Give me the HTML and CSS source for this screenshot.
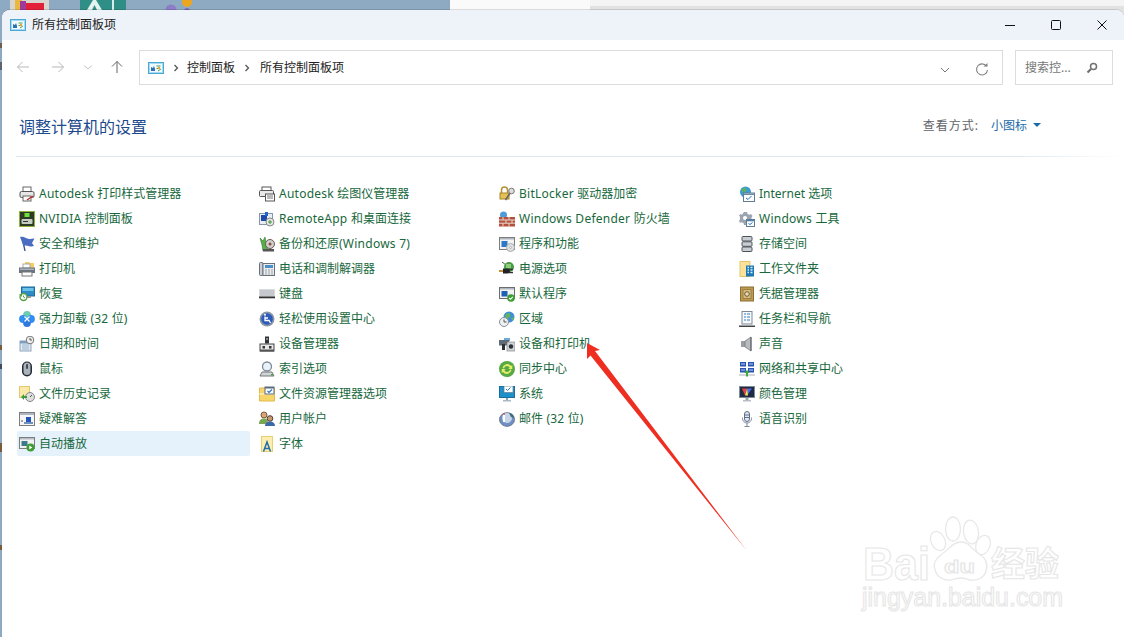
FILE: index.html
```html
<!DOCTYPE html>
<html lang="zh-CN">
<head>
<meta charset="utf-8">
<title>所有控制面板项</title>
<link rel="stylesheet" href="styles.css">
</head>
<body>
<svg class="defs" width="0" height="0" aria-hidden="true">
  <symbol id="cp" viewBox="0 0 16 12">
    <rect x=".5" y=".5" width="15" height="11" fill="#a5dcf3" stroke="#4aa8d6"/>
    <rect x="2" y="2" width="12" height="8" fill="#f1fafe"/>
    <path d="M3 9V5l2 1 1-2 1 3v2z" fill="#2f6fb5"/>
    <path d="M8.500 4h4M8.500 6.500h2M10 9l3-2" stroke="#4f9a5c" fill="none"/>
    <circle cx="11" cy="6" r="1.200" fill="#e2a62f"/>
  </symbol>
</svg>
<div class="screen">
  <div class="desk">
    <svg class="desk-art" width="450" height="10" viewBox="0 0 450 10" aria-hidden="true">
      <rect x="10" width="39" height="10" fill="#d8d4d0"/>
      <rect x="15" width="7" height="10" fill="#e8b93c"/>
      <rect x="20" y="1" width="6" height="9" fill="#a03a9a"/>
      <rect x="26" y="3" width="18" height="7" fill="#e2203a"/>
      <rect x="80" width="46" height="10" fill="#2f8f86"/>
      <rect x="112" width="2" height="10" fill="#d8efe9"/>
      <path d="M87 10l6-10h3l6 10z" fill="#e4f3ef"/>
      <path d="M92 10l2.500-5 2.500 5z" fill="#2f8f86"/>
      <circle cx="171" cy="10" r="5.500" fill="#8d7cc8"/>
      <circle cx="187" cy="2" r="5" fill="#eda71f"/>
      <circle cx="187" cy="11" r="3" fill="#7d6cc0"/>
    </svg>
  </div>
  <main class="window">
    <header class="titlebar">
      <svg class="cp-icon"><use href="#cp"/></svg>
      <span class="title">所有控制面板项</span>
      <div class="controls">
        <svg class="ctl" viewBox="0 0 12 12"><path d="M1 6.500h10" stroke="#111" fill="none"/></svg>
        <svg class="ctl" viewBox="0 0 12 12"><rect x="1.500" y="1.500" width="9" height="9" rx="1" stroke="#111" fill="none"/></svg>
        <svg class="ctl" viewBox="0 0 12 12"><path d="M1.500 1.500l9 9M10.500 1.500l-9 9" stroke="#111" fill="none"/></svg>
      </div>
    </header>
    <section class="toolbar">
      <nav class="nav">
        <svg class="nav-btn" viewBox="0 0 14 14"><path d="M13 7H1.500M6.500 2L1.500 7l5 5" stroke="#b9b9b9" fill="none"/></svg>
        <svg class="nav-btn nav-fwd" viewBox="0 0 14 14"><path d="M1 7h11.500M7.500 2l5 5-5 5" stroke="#b9b9b9" fill="none"/></svg>
        <svg class="nav-btn nav-chev" viewBox="0 0 14 14"><path d="M2.500 5.500L7 9l4.500-3.500" stroke="#b9b9b9" fill="none"/></svg>
        <svg class="nav-btn nav-up" viewBox="0 0 14 14"><path d="M7 13V1.500M2 6.500l5-5 5 5" stroke="#666" fill="none"/></svg>
      </nav>
      <div class="address">
        <svg class="cp-icon"><use href="#cp"/></svg>
        <svg class="crumb-sep" viewBox="0 0 6 8"><path d="M1.500 1l3 3-3 3" stroke="#555" stroke-width="1.300" fill="none"/></svg>
        <span class="crumb crumb-first">控制面板</span>
        <svg class="crumb-sep" viewBox="0 0 6 8"><path d="M1.500 1l3 3-3 3" stroke="#555" stroke-width="1.300" fill="none"/></svg>
        <span class="crumb crumb-last">所有控制面板项</span>
        <svg class="addr-chev" viewBox="0 0 10 6"><path d="M1 1l4 4 4-4" stroke="#777" fill="none"/></svg>
        <svg class="addr-refresh" viewBox="0 0 14 14"><path d="M11.500 3.200A5.500 5.500 0 1 0 12.500 7" stroke="#808080" stroke-width="1.100" fill="none"/><path d="M8.500 3.500h4v-3.500z" fill="#808080"/></svg>
      </div>
      <div class="search">
        <span class="search-text">搜索控...</span>
        <svg class="search-icon" viewBox="0 0 12 12"><circle cx="7.500" cy="4.500" r="3" stroke="#707070" stroke-width="1.500" fill="none"/><path d="M5 7l-3.500 3.500" stroke="#707070" stroke-width="2.200"/></svg>
      </div>
    </section>
    <section class="header">
      <h1 class="heading">调整计算机的设置</h1>
      <div class="viewby">
        <span class="viewby-label">查看方式:</span>
        <span class="viewby-value">小图标</span>
        <span class="viewby-caret"></span>
      </div>
    </section>
    <hr class="rule">
    <section class="grid">
      <div class="col">
        <a class="item"><svg class="ic" viewBox="0 0 16 16"><rect x="4" y="1" width="8" height="5" fill="#fff" stroke="#666"/><rect x="1" y="5.500" width="14" height="6" rx="1.500" fill="#e6e6e6" stroke="#555"/><rect x="4" y="10" width="8" height="5" fill="#fff" stroke="#666"/><path d="M8 14l6-4" stroke="#b8332a" stroke-width="1.500"/></svg><span><span class="lat">Autodesk </span>打印样式管理器</span></a>
        <a class="item"><svg class="ic" viewBox="0 0 16 16"><rect x=".5" y=".5" width="15" height="15" fill="#2d3a26" stroke="#8fb339"/><rect x="5.500" y="2" width="5" height="4" fill="#6fe03a"/><rect x="2.500" y="8" width="11" height="5" rx="1" fill="#c5ccc0"/><rect x="4" y="10" width="5" height="1" fill="#333"/></svg><span><span class="lat">NVIDIA </span>控制面板</span></a>
        <a class="item"><svg class="ic" viewBox="0 0 16 16"><path d="M3 1l3 14" stroke="#3a4f8a" stroke-width="1.300"/><path d="M1 1c4-1 6 2 9 2 2 0 4-.500 5.500-.500L13 7l2 3c-4 1.500-6-1-9-.500L4.500 10z" fill="#4a6cc2"/></svg><span>安全和维护</span></a>
        <a class="item"><svg class="ic" viewBox="0 0 16 16"><path d="M6 1h4l1 1h4v6H6z" fill="#f3cf62"/><rect x="4" y="3" width="7" height="4" fill="#fff" stroke="#aaa"/><rect x="0" y="6.500" width="16" height="5.500" fill="#6b7480"/><rect x="1" y="7.500" width="14" height="1.500" fill="#a9b1ba"/><rect x="3" y="11" width="10" height="4" fill="#fff" stroke="#777"/></svg><span>打印机</span></a>
        <a class="item"><svg class="ic" viewBox="0 0 16 16"><rect x="2.500" y="1" width="13" height="9" fill="#2d8cc8" stroke="#1a6a9c"/><rect x="3.500" y="2" width="11" height="3" fill="#6cc1e8"/><rect x="8" y="10" width="4" height="2" fill="#999"/><circle cx="4.500" cy="11" r="3.500" fill="#fff" stroke="#56a04a" stroke-width="1.400"/><path d="M0 8h3v3z" fill="#56a04a"/><path d="M4.500 9.500V11l1.500 1" stroke="#56a04a" fill="none"/></svg><span>恢复</span></a>
        <a class="item"><svg class="ic" viewBox="0 0 16 16"><circle cx="8" cy="4" r="3.900" fill="#6ccbb0"/><circle cx="4" cy="8" r="3.900" fill="#2f8ef0"/><circle cx="12" cy="8" r="3.900" fill="#2f8ef0"/><circle cx="8" cy="12" r="3.900" fill="#2f78e0"/><path d="M5.500 5.500l5 5M10.500 5.500l-5 5" stroke="#fff" stroke-width="1.200"/></svg><span>强力卸载<span class="lat"> (32 </span>位)</span></a>
        <a class="item"><svg class="ic" viewBox="0 0 16 16"><rect x="1" y="5" width="11" height="10" fill="#dfe9f4" stroke="#8fa4bb"/><rect x="1" y="5" width="11" height="2.500" fill="#7f9cbd"/><path d="M3 9h7M3 11h7M3 13h7" stroke="#9ab3cc"/><circle cx="11" cy="4" r="3.800" fill="#eee" stroke="#777"/><path d="M11 2v2h2" stroke="#555" fill="none"/></svg><span>日期和时间</span></a>
        <a class="item"><svg class="ic" viewBox="0 0 16 16"><rect x="3" y=".5" width="10" height="15" rx="5" fill="#222a33"/><rect x="4.500" y="1.500" width="7" height="12.500" rx="3.500" fill="#aab2bc"/><rect x="7.200" y="3" width="1.600" height="5" rx=".800" fill="#333"/></svg><span>鼠标</span></a>
        <a class="item"><svg class="ic" viewBox="0 0 16 16"><rect x=".5" y=".5" width="10" height="11" fill="#fbe9a7" stroke="#e0c870"/><circle cx="11" cy="11" r="4.500" fill="#ddd" stroke="#888"/><path d="M11 11l2-2" stroke="#555"/><path d="M2 11l3-3v2h3v2H5v2z" fill="#3d9a3c"/></svg><span>文件历史记录</span></a>
        <a class="item"><svg class="ic" viewBox="0 0 16 16"><rect x=".5" y="1.500" width="15" height="13" fill="#f6f6f6" stroke="#7d7d7d"/><rect x="1" y="2" width="14" height="2" fill="#aeb6bf"/><path d="M7 11V6h5v5z" fill="#2355b8"/><path d="M5 13h9v-2H5z" fill="#6f8fc0"/><circle cx="3" cy="10" r="1" fill="#888"/></svg><span>疑难解答</span></a>
        <a class="item hover"><svg class="ic" viewBox="0 0 16 16"><rect x=".5" y="1.500" width="15" height="11" fill="#f1f1f1" stroke="#7d7d7d"/><rect x="1" y="2" width="14" height="1.500" fill="#b5bdc6"/><rect x="2.500" y="5" width="6" height="5" fill="#3a7a8e"/><circle cx="11.500" cy="11.500" r="4" fill="#3f9d34"/><path d="M10.300 9.500l3 2-3 2z" fill="#fff"/></svg><span>自动播放</span></a>
      </div>
      <div class="col">
        <a class="item"><svg class="ic" viewBox="0 0 16 16"><rect x="3" y="1" width="9" height="4" fill="#fff" stroke="#555"/><rect x=".5" y="4.500" width="14" height="6" rx="1" fill="#e8e8e8" stroke="#555"/><rect x="6.500" y="8" width="9" height="7" fill="#fff" stroke="#555"/><path d="M8 10h6M8 12h6" stroke="#777"/></svg><span><span class="lat">Autodesk </span>绘图仪管理器</span></a>
        <a class="item"><svg class="ic" viewBox="0 0 16 16"><rect x=".5" y="2.500" width="13" height="11" fill="#e9eef5" stroke="#8795a6"/><path d="M2 4h6v6H2z" fill="#1f4aa8"/><path d="M6 1h3v4H6z" fill="#2266cc"/><circle cx="11" cy="11" r="4" fill="#e6e6e6" stroke="#888"/><path d="M9 11h4M11 9v4" stroke="#3a9a3a"/></svg><span><span class="lat">RemoteApp </span>和桌面连接</span></a>
        <a class="item"><svg class="ic" viewBox="0 0 16 16"><path d="M1 2l3 3 2-4 1 6 2 7-3-2-2 3-1-6z" fill="#55b048" stroke="#2f7a34" stroke-width=".6"/><circle cx="11" cy="8" r="4.500" fill="#cfcfcf" stroke="#6d5b4a"/><circle cx="11" cy="8" r="1.500" fill="#8a4c3a"/><rect x="4" y="13" width="11" height="2.500" fill="#555"/></svg><span>备份和还原<span class="lat">(Windows 7)</span></span></a>
        <a class="item"><svg class="ic" viewBox="0 0 16 16"><rect x=".5" y="1.500" width="3.500" height="13" rx="1" fill="#c9ced4" stroke="#69727c"/><rect x="4" y="2.500" width="11.500" height="12" fill="#e9edf1" stroke="#69727c"/><rect x="6" y="4" width="8" height="3" fill="#4a8fcb"/><path d="M6.500 9h1M9.500 9h1M12.500 9h1M6.500 11h1M9.500 11h1M12.500 11h1M6.500 13h1M9.500 13h1M12.500 13h1" stroke="#555"/></svg><span>电话和调制解调器</span></a>
        <a class="item"><svg class="ic" viewBox="0 0 16 16"><rect x="0" y="3" width="16" height="9" fill="#d8dade"/><rect x="0" y="10.500" width="16" height="1.800" fill="#333"/><path d="M1.500 5h13M1.500 7h13M1.500 9h13" stroke="#8f959c" stroke-dasharray="1 1"/></svg><span>键盘</span></a>
        <a class="item"><svg class="ic" viewBox="0 0 16 16"><circle cx="8" cy="8" r="7.500" fill="#8a96a8"/><circle cx="8" cy="8" r="5.800" fill="#2c5bb8"/><path d="M6 5.500v4h4l1.500 2.500M6 7h3" stroke="#fff" stroke-width="1.300" fill="none"/><circle cx="6" cy="3.800" r="1" fill="#fff"/></svg><span>轻松使用设置中心</span></a>
        <a class="item"><svg class="ic" viewBox="0 0 16 16"><rect x="6" y=".5" width="4" height="7" fill="#30353b"/><rect x="7" y="2" width="2" height="2" fill="#888"/><rect x="1" y="8" width="14" height="7" fill="#e8e8e8" stroke="#444"/><rect x="3.500" y="10" width="2.500" height="2.500" fill="#333"/><rect x="10" y="10" width="2.500" height="2.500" fill="#333"/><rect x="1" y="13.500" width="14" height="2" fill="#555"/></svg><span>设备管理器</span></a>
        <a class="item"><svg class="ic" viewBox="0 0 16 16"><path d="M1 15l2-4h10l2 4z" fill="#cfd4d9" stroke="#777"/><circle cx="8" cy="5.500" r="4.500" fill="#e8f2fb" stroke="#7f8a95" stroke-width="1.300"/><rect x="12" y="13" width="2" height="1.500" fill="#4aa03a"/></svg><span>索引选项</span></a>
        <a class="item"><svg class="ic" viewBox="0 0 16 16"><path d="M.500 2h15v13H.500z" fill="#f7d568" stroke="#e3b94b"/><rect x=".5" y="7" width="15" height="2" fill="#fbe8a8"/><rect x="6" y="1" width="9" height="7" fill="#fff" stroke="#596b80"/><rect x="6" y="1" width="9" height="1.500" fill="#596b80"/><path d="M8.500 5l1.500 1.500 3-3" stroke="#2a70c0" fill="none" stroke-width="1.200"/></svg><span>文件资源管理器选项</span></a>
        <a class="item"><svg class="ic" viewBox="0 0 16 16"><circle cx="5" cy="4" r="3" fill="#d8a478" stroke="#7a5a3c"/><path d="M0 13c0-4 2-5.500 5-5.500S9 9 9 13z" fill="#7aa654"/><circle cx="11" cy="7.500" r="2.800" fill="#c99a72" stroke="#4e3a2c"/><path d="M6 15c0-3 2-4.500 5-4.500s5 1.500 5 4.500z" fill="#3c68a8"/></svg><span>用户帐户</span></a>
        <a class="item"><svg class="ic" viewBox="0 0 16 16"><rect x="2.500" y=".5" width="11" height="15" fill="#fdeeb0" stroke="#e7cf74"/><path d="M4.500 15.500L8 6l3.500 9.500M5.800 12.500h4.400" stroke="#1f6fa8" stroke-width="1.500" fill="none"/></svg><span>字体</span></a>
      </div>
      <div class="col">
        <a class="item"><svg class="ic" viewBox="0 0 16 16"><path d="M2.500 7V4a3 3 0 0 1 6 0v3" stroke="#b7912f" stroke-width="1.500" fill="none"/><rect x="1" y="7" width="9" height="6" fill="#e5c052" stroke="#a8852a"/><path d="M6.500 14l6-9" stroke="#666" stroke-width="1.600"/><circle cx="12.500" cy="5" r="2.800" fill="#ddd" stroke="#777"/></svg><span><span class="lat">BitLocker </span>驱动器加密</span></a>
        <a class="item"><svg class="ic" viewBox="0 0 16 16"><circle cx="4.500" cy="4" r="3.500" fill="#4f9bd8"/><rect x="0" y="6" width="16" height="9.500" fill="#b3513c"/><path d="M0 9h16M0 12.200h16M4 6v3M10 6v3M7 9v3.200M13 9v3.200M4 12.200v3.300M10 12.200v3.300" stroke="#ecd7cf"/></svg><span><span class="lat">Windows Defender </span>防火墙</span></a>
        <a class="item"><svg class="ic" viewBox="0 0 16 16"><rect x=".5" y="1.500" width="15" height="12" fill="#f2f2f2" stroke="#7d7d7d"/><rect x="1" y="2" width="14" height="1.500" fill="#aeb6bf"/><rect x="2.500" y="5" width="6" height="6" fill="#2c78c8"/><circle cx="11.500" cy="11.500" r="4" fill="#dfe2e5" stroke="#aaa"/><circle cx="11.500" cy="11.500" r="1" fill="#fff" stroke="#888" stroke-width=".5"/></svg><span>程序和功能</span></a>
        <a class="item"><svg class="ic" viewBox="0 0 16 16"><path d="M3 1l4 3" stroke="#555"/><circle cx="10" cy="6" r="5" fill="#4a9a44"/><path d="M7 3h5v4H7z" fill="#8ccc7c"/><path d="M0 10h4" stroke="#c4922e" stroke-width="2"/><path d="M4 7.500h4.500a2.500 2.500 0 0 1 0 5H4z" fill="#1f2327"/><path d="M10 8.500h4M10 11.500h4" stroke="#333" stroke-width="1.500"/></svg><span>电源选项</span></a>
        <a class="item"><svg class="ic" viewBox="0 0 16 16"><rect x=".5" y="1.500" width="15" height="11" fill="#f2f2f2" stroke="#6d6d6d"/><rect x="1" y="2" width="14" height="1.500" fill="#aeb6bf"/><rect x="2.500" y="5" width="6" height="5.500" fill="#1f5fb4"/><circle cx="12" cy="12" r="3.800" fill="#3f9d34"/><path d="M10.200 12l1.300 1.300 2.300-2.500" stroke="#fff" fill="none" stroke-width="1.100"/></svg><span>默认程序</span></a>
        <a class="item"><svg class="ic" viewBox="0 0 16 16"><circle cx="10" cy="6" r="5.500" fill="#3f8fd8"/><path d="M6.500 3l4-1 1 3-3 3-2-2zM12 7l3-1-1 4z" fill="#62b658"/><circle cx="5" cy="11" r="4.500" fill="#eef0f2" stroke="#8a9099"/><path d="M5 8.500V11h2.500" stroke="#555" fill="none"/></svg><span>区域</span></a>
        <a class="item"><svg class="ic" viewBox="0 0 16 16"><path d="M5 2h6v3H5z" fill="#6fa9d8"/><rect x="0" y="4" width="10" height="5.500" fill="#5f6b76"/><rect x="3" y="8" width="3" height="6" fill="#2b3138"/><rect x="8" y="6" width="8" height="9" fill="#cfd3d8" stroke="#777" stroke-width=".6"/><circle cx="12" cy="10.500" r="2.200" fill="#2b3138"/></svg><span>设备和打印机</span></a>
        <a class="item"><svg class="ic" viewBox="0 0 16 16"><circle cx="8" cy="8" r="8" fill="#58a845"/><path d="M3.500 7a4.800 4.800 0 0 1 8.500-2l1.300-1v4h-4l1.400-1.200A3 3 0 0 0 5 7.500z" fill="#e4ee6a"/><path d="M12.500 9a4.800 4.800 0 0 1-8.500 2l-1.300 1V8h4L5.300 9.200A3 3 0 0 0 11 8.500z" fill="#e4ee6a"/></svg><span>同步中心</span></a>
        <a class="item"><svg class="ic" viewBox="0 0 16 16"><rect x=".5" y=".5" width="15" height="11" fill="#1f8fc8" stroke="#15709e"/><rect x="5" y="0" width="9" height="6.500" fill="#fff" stroke="#5e7c96" stroke-width=".7"/><path d="M7 3l1.500 1.500 3-3" stroke="#2a70c0" fill="none"/><rect x="7" y="12" width="2" height="2" fill="#8ba0b0"/><rect x="4" y="14" width="8" height="1.500" fill="#a9b8c4"/></svg><span>系统</span></a>
        <a class="item"><svg class="ic" viewBox="0 0 16 16"><ellipse cx="8" cy="8.500" rx="7.500" ry="6.800" fill="#6f8fc5" stroke="#69778f"/><ellipse cx="8" cy="7" rx="5" ry="5" fill="#c6d5ea"/><path d="M10 2a5 5 0 0 1 5 5l-3-1z" fill="#3f6a7a"/><rect x="4" y="3" width="2" height="8" fill="#fff"/><circle cx="5" cy="3" r=".9" fill="#c8453a"/></svg><span>邮件<span class="lat"> (32 </span>位)</span></a>
      </div>
      <div class="col">
        <a class="item"><svg class="ic" viewBox="0 0 16 16"><circle cx="6.500" cy="6" r="5.500" fill="#3d9ad8"/><path d="M2 4l4-3 2 3-3 4zM9 6l2 1-2 3z" fill="#58b06a"/><rect x="4.500" y="7" width="11" height="8.500" fill="#fff" stroke="#5e7c96"/><rect x="5" y="7.500" width="10" height="1.500" fill="#6c89a8"/><path d="M7 12l2 1.500 3.500-3.500" stroke="#2a70c0" fill="none"/></svg><span>Internet 选项</span></a>
        <a class="item"><svg class="ic" viewBox="0 0 16 16"><path d="M5 1h3l.500 2 2 .800L12 3l1.500 2-1 1.500V9l1 1H10v4H5l-.500-2-2-.800L1 12 0 9.500l1-1V6L0 4.500 1.500 3l1.500.800z" fill="#9aa5b0"/><circle cx="6" cy="7" r="2" fill="#fff"/><rect x="7.500" y="8.500" width="8" height="7" fill="#fff" stroke="#5e7c96"/><rect x="8" y="9" width="7" height="1.300" fill="#4a7fb0"/><path d="M9.500 12.500l1.500 1 2.500-2" stroke="#2a70c0" fill="none"/></svg><span><span class="lat">Windows </span>工具</span></a>
        <a class="item"><svg class="ic" viewBox="0 0 16 16"><rect x="3" y=".5" width="10" height="4.500" rx="1" fill="#c9ced4" stroke="#4e545b"/><rect x="3" y="5.800" width="10" height="4.500" rx="1" fill="#c9ced4" stroke="#4e545b"/><rect x="3" y="11" width="10" height="4.500" rx="1" fill="#c9ced4" stroke="#4e545b"/></svg><span>存储空间</span></a>
        <a class="item"><svg class="ic" viewBox="0 0 16 16"><rect x="1" y=".5" width="10" height="15" fill="#fce29a" stroke="#e7c56a"/><rect x="7" y="4.500" width="8" height="11" fill="#1f78b4"/><path d="M8.500 6.500h1.500M11.500 6.500h2M8.500 9h1.500M11.500 9h2M8.500 11.500h1.500M11.500 11.500h2" stroke="#d5eefc" stroke-width="1.300"/></svg><span>工作文件夹</span></a>
        <a class="item"><svg class="ic" viewBox="0 0 16 16"><rect x="1.500" y="1" width="13" height="14" fill="#bd9a52" stroke="#8d6f30"/><rect x="4" y="3.500" width="8" height="9" fill="#d6bb7e" stroke="#9c7f40"/><circle cx="8" cy="8" r="2.300" fill="#e8dcc0" stroke="#6f5a2c"/></svg><span>凭据管理器</span></a>
        <a class="item"><svg class="ic" viewBox="0 0 16 16"><rect x="3" y=".5" width="10" height="12.500" fill="#f8f9fb" stroke="#7d8794"/><path d="M5 3h2M8 3h3M5 6h2M8 6h3M5 9h2M8 9h3" stroke="#2f7fc0"/><rect x="0" y="14.500" width="16" height="1.500" fill="#444"/></svg><span>任务栏和导航</span></a>
        <a class="item"><svg class="ic" viewBox="0 0 16 16"><rect x="2" y="5" width="4" height="6" fill="#9a9fa4"/><path d="M6 5l6-4v14l-6-4z" fill="#b7bbbf" stroke="#72767b" stroke-width=".7"/><path d="M12 1v14" stroke="#55595e"/></svg><span>声音</span></a>
        <a class="item"><svg class="ic" viewBox="0 0 16 16"><rect x="1" y="1" width="6" height="4.500" fill="#2855b4"/><rect x="9" y="1" width="6" height="4.500" fill="#2855b4"/><rect x="1" y="7" width="6" height="4.500" fill="#2855b4"/><rect x="9" y="7" width="6" height="4.500" fill="#2855b4"/><path d="M2 3h4M10 3h4M2 9h4M10 9h4" stroke="#bcd0ee"/><path d="M0 14h16" stroke="#a8b0b8"/><path d="M8 9l3 3H9v3.500H7V12H5z" fill="#3fa83f"/></svg><span>网络和共享中心</span></a>
        <a class="item"><svg class="ic" viewBox="0 0 16 16"><rect x=".5" y=".5" width="15" height="11" fill="#1f2a44" stroke="#7f8a96"/><path d="M3 2.500h5l-2 7z" fill="#e84040"/><path d="M8 2.500h5l-5 7z" fill="#4a6fe8"/><path d="M6 9.500l2-7 1 7z" fill="#f3e250"/><rect x="6.500" y="12" width="3" height="2" fill="#9aa2aa"/><rect x="4" y="14" width="8" height="1.500" fill="#b5bcc4"/></svg><span>颜色管理</span></a>
        <a class="item"><svg class="ic" viewBox="0 0 16 16"><rect x="5.500" y=".5" width="5" height="10" rx="2.500" fill="#e2e6ee" stroke="#5f6f88"/><path d="M6 4h4M6 6.500h4" stroke="#5f6f88"/><path d="M3.500 6.500v1a4.500 4.500 0 0 0 9 0v-1M8 12v3.500M5.500 15.500h5" stroke="#7d8aa0" fill="none"/></svg><span>语音识别</span></a>
      </div>
    </section>
  </main>
  <svg class="arrow" width="170" height="215" viewBox="580 340 170 215" aria-hidden="true">
    <path d="M587 343L600 350 595 351 747 551 590.500 355.500 587 359z" fill="#ee2e20"/>
  </svg>
  <svg class="watermark" width="240" height="112" viewBox="850 510 240 112" aria-label="Baidu 经验">
    <g class="wm-paw">
      <ellipse cx="953" cy="529" rx="7.500" ry="12"/>
      <ellipse cx="971" cy="532" rx="7.500" ry="12" transform="rotate(-8 971 532)"/>
      <ellipse cx="938" cy="541" rx="7" ry="10" transform="rotate(-25 938 541)"/>
      <ellipse cx="983" cy="545" rx="7" ry="10" transform="rotate(20 983 545)"/>
      <path d="M961 542c9 0 11 8 18 12 7 4 9 10 7 17-2 7-9 10-16 9-4-1-6-2-9-2s-6 1-10 2c-7 1-14-3-16-10-2-6 1-12 7-16 7-4 10-12 19-12z"/>
    </g>
    <text class="wm wm-bai" x="863" y="580" textLength="67" lengthAdjust="spacingAndGlyphs">Bai</text>
    <text class="wm wm-du" x="944" y="573" textLength="31" lengthAdjust="spacingAndGlyphs">du</text>
    <text class="wm wm-cn" x="991" y="576">经验</text>
    <text class="wm wm-url" x="862" y="606" textLength="201" lengthAdjust="spacingAndGlyphs">jingyan.baidu.com</text>
  </svg>
</div>
</body>
</html>
```
FILE: styles.css
```css
* { box-sizing: border-box; }
html, body { margin: 0; padding: 0; }
body {
  width: 1124px;
  height: 637px;
  overflow: hidden;
  background: #fff;
  font-family: "Noto Sans", "Noto Sans CJK SC", sans-serif;
  font-size: 12px;
}
.defs { position: absolute; }
.screen {
  position: relative;
  width: 1124px;
  height: 637px;
  overflow: hidden;
  display: flex;
  flex-direction: column;
  background:
    linear-gradient(to bottom,
      transparent 43px, #6d5d4c 43px, #6d5d4c 48px, transparent 48px,
      transparent 62px, #5c6470 62px, #5c6470 70px, transparent 70px,
      transparent 345px, #7a5a3c 345px, #7a5a3c 350px, transparent 350px,
      transparent 364px, #3f4a5c 364px, #3f4a5c 369px, transparent 369px,
      transparent 443px, #7a5a3c 443px, #7a5a3c 452px, transparent 452px,
      transparent 545px, #7a5a3c 545px, #7a5a3c 550px, transparent 550px) 0 0 / 2px 100% no-repeat,
    linear-gradient(to bottom, #f4f4f4 0, #f4f4f4 6px, #e2e2e2 6px, #e2e2e2 100%) 590px 0 / 534px 20px no-repeat,
    linear-gradient(to right, #8ea9c2 0, #8ea9c2 450px, #fafafa 450px, #fafafa 100%);
}
.desk { height: 10px; flex: none; display: flex; overflow: hidden; }
.desk-art { display: block; }
.window {
  flex: 1;
  margin-left: 2px;
  background: #fff;
  border-radius: 8px 8px 0 0;
  box-shadow: 0 -1px 0 rgba(0, 0, 0, .12);
  display: flex;
  flex-direction: column;
  min-height: 0;
}
.titlebar {
  height: 30px;
  flex: none;
  background: #eef3fa;
  border-radius: 8px 8px 0 0;
  display: flex;
  align-items: center;
  padding-left: 8px;
}
.cp-icon { width: 16px; height: 12px; flex: none; }
.title { margin-left: 6px; color: #222; line-height: 16px; }
.controls {
  margin-left: auto;
  display: flex;
  gap: 34px;
  padding-right: 16px;
}
.ctl { width: 12px; height: 12px; display: block; }
.toolbar {
  height: 45px;
  flex: none;
  display: flex;
  align-items: flex-start;
  padding-top: 10px;
}
.nav {
  width: 137px;
  height: 34px;
  flex: none;
  display: flex;
  align-items: center;
  padding-left: 14px;
}
.nav-btn { width: 14px; height: 14px; flex: none; }
.nav-fwd { margin-left: 21px; }
.nav-chev { margin-left: 17px; width: 12px; height: 12px; }
.nav-up { margin-left: 16px; }
.address {
  width: 864px;
  height: 35px;
  flex: none;
  border: 1px solid #dcdcdc;
  display: flex;
  align-items: center;
  padding-left: 8px;
  color: #222;
}
.crumb { margin-bottom: 2px; }
.crumb-first { margin-left: -1px; }
.crumb-last { margin-left: 1px; }
.crumb-sep { width: 6px; height: 8px; margin: 0 9px; flex: none; }
.addr-chev { width: 10px; height: 6px; margin-left: auto; margin-top: 5px; }
.addr-refresh { width: 14px; height: 14px; margin: 5px 13px 0 25px; }
.search {
  width: 98px;
  height: 35px;
  flex: none;
  margin-left: 12px;
  border: 1px solid #dcdcdc;
  display: flex;
  align-items: center;
  padding: 0 14px 0 9px;
  color: #777;
  justify-content: space-between;
}
.search-text { margin-bottom: 2px; }
.search-icon { width: 12px; height: 12px; }
.header {
  height: 71px;
  flex: none;
  display: flex;
  align-items: flex-start;
  padding: 31px 0 0 17px;
}
.heading {
  margin: 0;
  font-size: 16px;
  font-weight: 400;
  line-height: 22px;
  color: #1d4a8c;
}
.viewby {
  margin-left: auto;
  padding-right: 83px;
  display: flex;
  align-items: center;
  height: 18px;
}
.viewby-label { color: #5f6468; letter-spacing: 1px; }
.viewby-value { color: #1a6aa8; margin-left: 12px; }
.viewby-caret {
  margin-left: 6px;
  border-left: 4px solid transparent;
  border-right: 4px solid transparent;
  border-top: 4px solid #1a6aa8;
}
.rule {
  margin: 0 0 0 14px;
  height: 1px;
  border: 0;
  flex: none;
  background: linear-gradient(to right, #dde8ee 0, #dde8ee 90%, #fff 100%);
}
.grid {
  display: flex;
  padding: 24px 0 0 15px;
}
.col { width: 240px; flex: none; display: flex; flex-direction: column; }
.item {
  width: 233px;
  height: 25px;
  display: flex;
  align-items: center;
  gap: 4px;
  padding-left: 2px;
  color: #17683c;
  white-space: pre;
  border-radius: 2px;
}
.item > span { margin-bottom: 2px; }
.lat { letter-spacing: .25px; }
.item.hover { background: #e5f1fb; }
.ic { width: 16px; height: 16px; flex: none; }
.arrow { position: absolute; left: 580px; top: 340px; }
.watermark { position: absolute; left: 850px; top: 510px; }
.wm-paw { fill: #fff; stroke: #e8e8e8; stroke-width: 1.300; }
.wm {
  fill: #fff;
  stroke: #e6e6e6;
  stroke-width: 1.100;
  font-family: "Liberation Sans", "Noto Sans CJK SC", sans-serif;
}
.wm-bai { font-size: 46px; font-weight: 700; }
.wm-du { font-size: 19px; font-weight: 700; }
.wm-cn { font-size: 34px; font-weight: 700; }
.wm-url { font-size: 25px; font-weight: 400; }
```
